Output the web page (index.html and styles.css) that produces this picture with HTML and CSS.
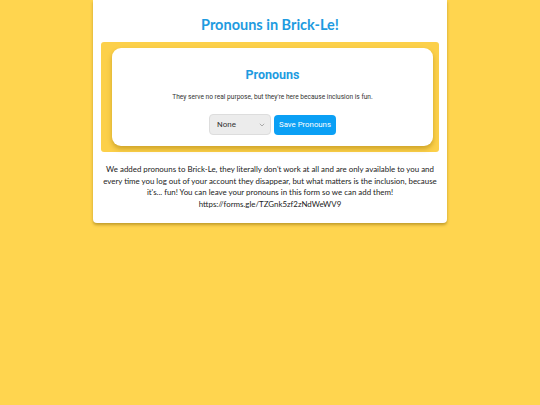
FILE: index.html
```html
<!DOCTYPE html>
<html>
<head>
<meta charset="utf-8">
<link rel="stylesheet" href="styles.css">
</head>
<body>
<div class="page">
  <main class="card">
    <h1 class="title">Pronouns in Brick-Le!</h1>
    <section class="band">
      <div class="panel">
        <h2 class="panel-title">Pronouns</h2>
        <p class="panel-text">They serve no real purpose, but they're here because inclusion is fun.</p>
        <div class="controls">
          <div class="select">
            <span>None</span>
            <svg class="chev" width="6" height="4" viewBox="0 0 6 4"><path d="M0.8 0.8 L3 3 L5.2 0.8" fill="none" stroke="#999" stroke-width="0.8"/></svg>
          </div>
          <button class="save">Save Pronouns</button>
        </div>
      </div>
    </section>
    <p class="info">We added pronouns to Brick-Le, they literally don't work at all and are only available to you and every time you log out of your account they disappear, but what matters is the inclusion, because it's... fun! You can leave your pronouns in this form so we can add them!<br>https://forms.gle/TZGnk5zf2zNdWeWV9</p>
  </main>
</div>
</body>
</html>
```
FILE: styles.css
```css
* { box-sizing: border-box; }
html, body { margin: 0; padding: 0; }
body {
  background: #ffd54f;
  width: 540px;
  height: 405px;
  overflow: hidden;
  font-family: Lato, sans-serif;
}
.page {
  display: flex;
  justify-content: center;
}
.card {
  width: 354px;
  background: #fff;
  border-radius: 0 0 4px 4px;
  box-shadow: 0 2px 3px rgba(120, 90, 0, 0.45);
  padding: 15px 8px 13px;
}
.title {
  margin: 0;
  text-align: center;
  color: #1e9be0;
  font-size: 14.5px;
  font-weight: 700;
  line-height: 20px;
}
.band {
  margin-top: 7px;
  background: #fcd04a;
  border-radius: 3px;
  padding: 6px 6px 6px 11px;
}
.panel {
  background: #fff;
  border-radius: 9px;
  box-shadow: 0 3px 5px rgba(150, 110, 0, 0.45);
  padding: 19px 10px 11px;
  text-align: center;
  font-family: Roboto, sans-serif;
}
.panel-title {
  margin: 0;
  color: #1e9be0;
  font-size: 12.5px;
  font-weight: 700;
  line-height: 16px;
}
.panel-text {
  margin: 9px 0 0;
  font-size: 6.6px;
  color: #333;
  line-height: 10px;
}
.controls {
  margin-top: 12px;
  display: flex;
  justify-content: center;
  align-items: center;
  gap: 3px;
}
.select {
  width: 62px;
  height: 21px;
  background: #ececec;
  border: 1px solid #ddd;
  border-radius: 4px;
  display: flex;
  align-items: center;
  justify-content: space-between;
  padding: 0 5px 0 7px;
  font-family: Roboto, sans-serif;
  font-weight: 400;
  font-size: 8px;
  color: #333;
}
.save {
  height: 20px;
  padding: 0 5px;
  border: none;
  border-radius: 4px;
  background: #0ba0f5;
  color: #fff;
  font-family: Roboto, sans-serif;
  font-size: 7.8px;
}
.info {
  margin: 12px -3px 0;
  text-align: center;
  font-size: 7.9px;
  line-height: 11.5px;
  color: #222;
}
```
